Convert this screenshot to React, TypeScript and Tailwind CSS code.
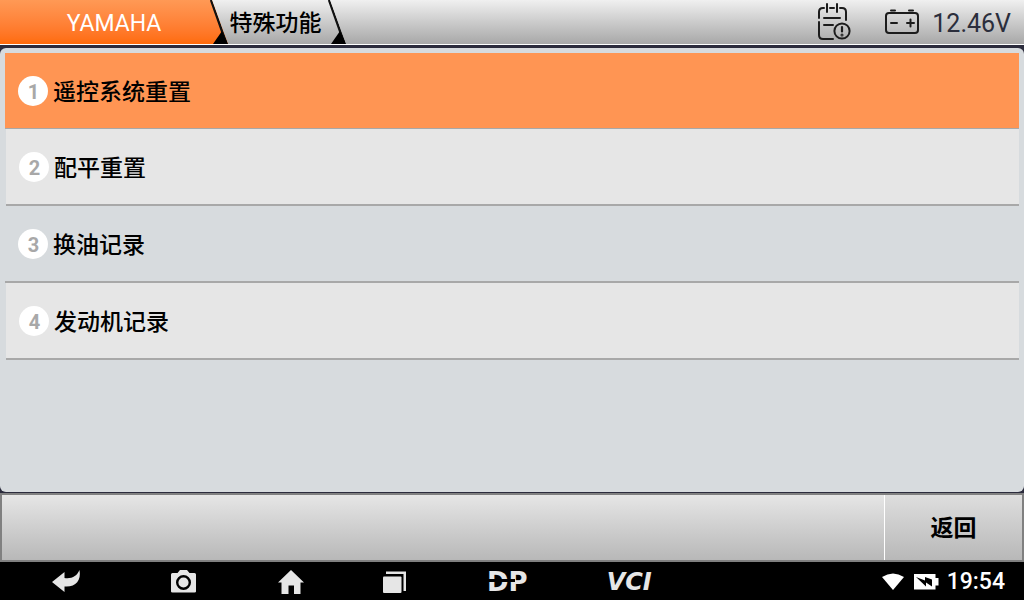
import { ReactNode } from 'react';
import clsx from 'clsx';

const functions = ['遥控系统重置', '配平重置', '换油记录', '发动机记录'];

function TabEdge() {
    return (
        <svg
            className="absolute top-0 right-0 h-11 w-[18px]"
            viewBox="0 0 18 44"
            aria-hidden="true">
            <path d="M1 0 L12 31 L17 44" fill="none" stroke="#111" strokeWidth="2.4" />
            <path d="M12 31 L18 44 H3 Z" fill="#000" />
        </svg>
    );
}

interface TabProps {
    children: ReactNode;
    className?: string;
}

function Tab({ children, className }: TabProps) {
    return (
        <button
            type="button"
            className={clsx(
                'relative h-11 pt-0.5 whitespace-nowrap text-[23px] leading-none',
                '[clip-path:polygon(0_0,calc(100%-16px)_0,100%_100%,0_100%)]',
                className,
            )}>
            {children}
            <TabEdge />
        </button>
    );
}

function ReportIcon() {
    return (
        <svg
            className="h-10 w-9"
            viewBox="0 0 36 40"
            fill="none"
            stroke="#1c1c1c"
            strokeWidth="2"
            strokeLinecap="round"
            aria-hidden="true">
            <path d="M17 37 H7 Q3 37 3 33 V20 M3 16 V10 Q3 6 7 6 H8 M14 6 H18 M24 6 H26 Q30 6 30 10 V18" />
            <path d="M11 2 V10 M21 2 V10 M8 16 H24 M8 23 H17" />
            <circle cx="26" cy="29" r="7.6" />
            <path d="M26 25 V29.5" strokeWidth="2.2" />
            <circle cx="26" cy="33" r="0.5" />
        </svg>
    );
}

function CarBatteryIcon() {
    return (
        <svg
            className="h-7 w-9"
            viewBox="0 0 36 28"
            fill="none"
            stroke="#1c1c1c"
            strokeWidth="2"
            strokeLinecap="round"
            aria-hidden="true">
            <rect x="2" y="5" width="32" height="20" rx="3" />
            <path d="M7 2.5 H11 M25 2.5 H29" />
            <path d="M7 15 H13 M23 15 H30 M26.5 11.5 V18.5" />
        </svg>
    );
}

function Header() {
    return (
        <header className="flex h-[45px] shrink-0 items-start justify-between border-b border-white bg-linear-to-b from-[#f0f0f0] to-[#a8a8a8]">
            <div className="flex">
                <Tab className="w-[228px] bg-linear-to-b from-[#ff9955] to-[#ff6b08] text-white">
                    YAMAHA
                </Tab>
                <Tab className="w-[118px] pr-[23px] font-medium text-black">
                    特殊功能
                </Tab>
            </div>

            <div className="flex h-11 items-center pr-[13px]">
                <button type="button" aria-label="诊断记录" className="mr-8">
                    <ReportIcon />
                </button>
                <CarBatteryIcon />
                <span className="ml-3 pt-0.5 text-[25px] leading-none text-[#2b2e3c]">
                    12.46V
                </span>
            </div>
        </header>
    );
}

interface FunctionRowProps {
    index: number;
    label: string;
}

function FunctionRow({ index, label }: FunctionRowProps) {
    const selected = index === 0;
    const shaded = index % 2 === 1;

    return (
        <li className={clsx(shaded && 'pl-px')}>
            <button
                type="button"
                className={clsx(
                    'flex w-full items-center gap-[5px] border-[#a8a8a8] pl-[13px] text-left text-[23px] text-black',
                    selected && 'h-[76px] border-b bg-[#ff9553]',
                    !selected && 'h-[77px] border-b-2',
                    shaded && 'bg-[#e6e6e6]',
                )}>
                <span className="flex size-[30px] items-center justify-center rounded-full bg-white pt-0.5 pl-px text-xl leading-none font-bold text-[#a8a8a8]">
                    {index + 1}
                </span>
                <span className="pt-1.5 font-medium">{label}</span>
            </button>
        </li>
    );
}

interface NavButtonProps {
    children: ReactNode;
    label: string;
    className?: string;
}

function NavButton({ children, label, className }: NavButtonProps) {
    return (
        <button
            type="button"
            aria-label={label}
            className={clsx('flex h-full items-center justify-center', className)}>
            {children}
        </button>
    );
}

function SystemBar() {
    return (
        <nav className="flex h-[38px] shrink-0 items-center justify-between bg-black pr-[19px] pl-[50px] text-[#e6e6e6]">
            <div className="flex h-full items-center pt-px">
                <NavButton label="后退" className="mr-[89px]">
                    <svg className="h-6 w-8" viewBox="0 0 32 24" fill="currentColor">
                        <path d="M2 12 L14.5 2 V8 C22 9 27 6 29.5 0 C31.5 11 25 17.5 14.5 16.5 V22 Z" />
                    </svg>
                </NavButton>
                <NavButton label="截屏" className="mr-20">
                    <svg className="h-6 w-[26px]" viewBox="0 0 26 24" fill="currentColor">
                        <path d="M0 4.5 Q0 3 1.5 3 H6.5 L9 0 H16 L18.5 3 H23.5 Q25 3 25 4.5 V21.5 Q25 22.5 23.5 22.5 H1.5 Q0 22.5 0 21.5 Z" />
                        <circle cx="12.5" cy="12.5" r="6.3" fill="none" stroke="#000" strokeWidth="2.4" />
                    </svg>
                </NavButton>
                <NavButton label="主页" className="mr-[78px]">
                    <svg className="h-6 w-7" viewBox="0 0 28 24" fill="currentColor">
                        <path d="M14 0 L27 12.5 H23.5 V24 H17 V15.5 H11.5 V24 H4.5 V12.5 H1 Z" />
                    </svg>
                </NavButton>
                <NavButton label="最近任务" className="mr-20">
                    <svg className="h-6 w-6" viewBox="0 0 24 24" fill="currentColor">
                        <rect x="0" y="6.5" width="18.5" height="16.5" rx="1" />
                        <path d="M3 1.5 H23 V21 H20.5 V4 H3 Z" />
                    </svg>
                </NavButton>
                <NavButton
                    label="DP"
                    className="relative mr-[79px] font-['DejaVu_Sans'] text-[26px] leading-none font-bold">
                    DP
                    <span className="absolute top-4 left-0 h-[3px] w-[9px] bg-black" />
                    <span className="absolute top-4 left-[12px] h-[3px] w-4 bg-black" />
                </NavButton>
                <NavButton
                    label="VCI"
                    className="font-['DejaVu_Sans'] text-2xl leading-none font-bold italic">
                    VCI
                </NavButton>
            </div>

            <div className="flex items-center gap-2 pt-px text-white">
                <svg className="h-[18px] w-6" viewBox="0 0 24 18" fill="currentColor">
                    <path d="M12 17 L1 4 Q12 -3 23 4 Z" />
                </svg>
                <svg className="h-[18px] w-[26px]" viewBox="0 0 26 18" fill="currentColor">
                    <path d="M1 1 H22.5 V5 H25.5 V12.5 H22.5 V16.5 H1 Z" />
                    <path d="M3 4 L12 7.5 V4 L19 6.5 V13.5 L13 9.5 V13.5 Z" fill="#000" />
                </svg>
                <time className="text-[23px] leading-none font-medium">19:54</time>
            </div>
        </nav>
    );
}

export default function App() {
    return (
        <div className="flex min-h-screen flex-col bg-[#2b2b3c] font-[Roboto,'Noto_Sans_CJK_SC',sans-serif]">
            <Header />

            <main className="mt-[3px] mb-px grow rounded-md bg-[#d7dbde] p-[5px]">
                <ul>
                    {functions.map((label, index) => (
                        <FunctionRow key={label} index={index} label={label} />
                    ))}
                </ul>
            </main>

            <footer className="flex h-[69px] shrink-0 justify-end border-2 border-[#808080] bg-linear-to-b from-[#e6e6e6] to-[#b8b8b8]">
                <button
                    type="button"
                    className="w-[138px] border-l border-white bg-linear-to-b from-[#dedede] to-[#b8b8b8] pt-1 text-[23px] font-bold text-black">
                    返回
                </button>
            </footer>

            <SystemBar />
        </div>
    );
}
